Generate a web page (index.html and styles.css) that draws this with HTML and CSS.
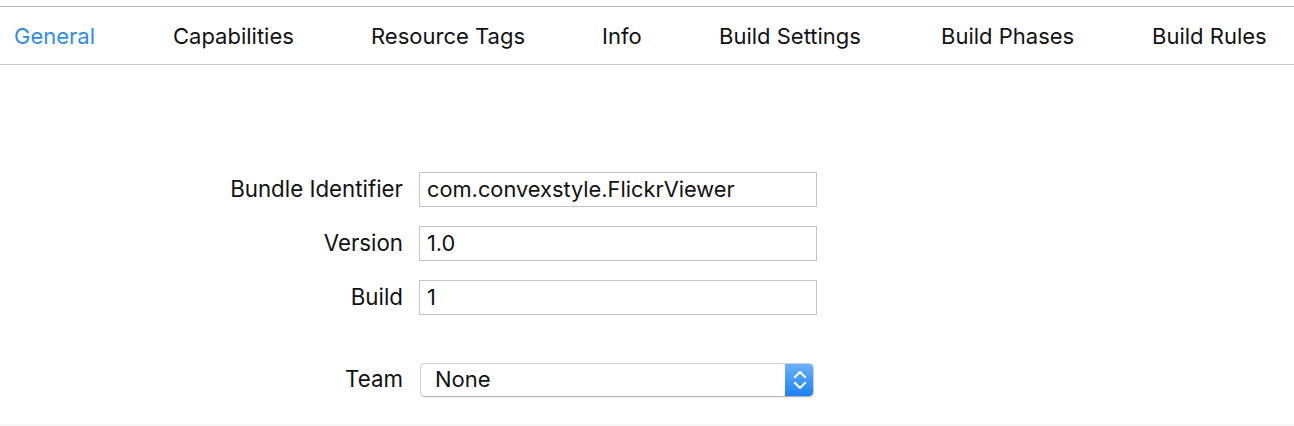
FILE: index.html
```html
<!DOCTYPE html>
<html>
<head>
<meta charset="utf-8">
<link rel="stylesheet" href="styles.css">
</head>
<body>
<div class="page">
  <nav class="tabs">
    <span class="tab active">General</span>
    <span class="tab">Capabilities</span>
    <span class="tab">Resource Tags</span>
    <span class="tab">Info</span>
    <span class="tab">Build Settings</span>
    <span class="tab">Build Phases</span>
    <span class="tab">Build Rules</span>
  </nav>
  <main class="content">
    <div class="form">
      <label class="label">Bundle Identifier</label>
      <div class="field">com.convexstyle.FlickrViewer</div>
      <label class="label">Version</label>
      <div class="field">1.0</div>
      <label class="label">Build</label>
      <div class="field">1</div>
      <label class="label team-label">Team</label>
      <div class="popup team-popup">
        <span class="popup-value">None</span>
        <span class="popup-arrows">
          <svg width="14" height="20" viewBox="0 0 14 20">
            <path d="M1.8 7.2 L7 2 L12.2 7.2" fill="none" stroke="#fff" stroke-width="2" stroke-linecap="round" stroke-linejoin="round"/>
            <path d="M1.8 12.8 L7 18 L12.2 12.8" fill="none" stroke="#fff" stroke-width="2" stroke-linecap="round" stroke-linejoin="round"/>
          </svg>
        </span>
      </div>
    </div>
  </main>
  <div class="footer-strip"></div>
</div>
</body>
</html>
```
FILE: styles.css
```css
html, body {
  margin: 0;
  padding: 0;
  background: #ffffff;
}

body {
  font-family: Inter, "Liberation Sans", Arial, sans-serif;
  color: #1a1a1a;
}

.page {
  height: 426px;
  display: flex;
  flex-direction: column;
  padding-top: 6px;
  box-sizing: border-box;
}

.tabs {
  display: grid;
  grid-template-columns: 81px 120px 153px 39px 144px 133px 115px;
  column-gap: 78px;
  padding-left: 14px;
  align-items: center;
  border-top: 1px solid #b8b8b8;
  border-bottom: 1px solid #c6c6c6;
  box-sizing: border-box;
  height: 59px;
}

.tab {
  font-size: 22px;
  color: #111;
  white-space: nowrap;
}

.tab.active {
  color: #2f8be6;
}

.content {
  flex: 1;
  padding-top: 107px;
}

.form {
  display: grid;
  grid-template-columns: 403px 398px;
  column-gap: 16px;
  row-gap: 19px;
  align-items: center;
}

.label {
  text-align: right;
  font-size: 22.3px;
  color: #111;
  white-space: nowrap;
  padding-bottom: 2px;
}

.field {
  height: 35px;
  box-sizing: border-box;
  border: 1px solid #c4c4c4;
  padding-left: 7px;
  font-size: 21.8px;
  line-height: 33px;
  color: #111;
  white-space: nowrap;
}

.team-label,
.team-popup {
  margin-top: 29px;
}

.team-label {
  padding-bottom: 4px;
}

.popup {
  width: 394px;
  height: 34px;
  box-sizing: border-box;
  margin-left: 1px;
  border: 1px solid #cfcfcf;
  border-bottom-color: #b4b4b4;
  border-radius: 5px;
  box-shadow: 0 1px 1px rgba(0, 0, 0, 0.08);
  display: flex;
  align-items: stretch;
  overflow: hidden;
}

.popup-value {
  flex: 1;
  font-size: 22px;
  line-height: 31px;
  padding-left: 14px;
  color: #111;
}

.popup-arrows {
  width: 29px;
  background: linear-gradient(#6cb2fb, #1b80fa);
  display: flex;
  align-items: center;
  justify-content: center;
  margin: -1px -1px -1px 0;
}

.popup-arrows svg {
  display: block;
}

.footer-strip {
  height: 2px;
  background: #f6f6f6;
}
```
